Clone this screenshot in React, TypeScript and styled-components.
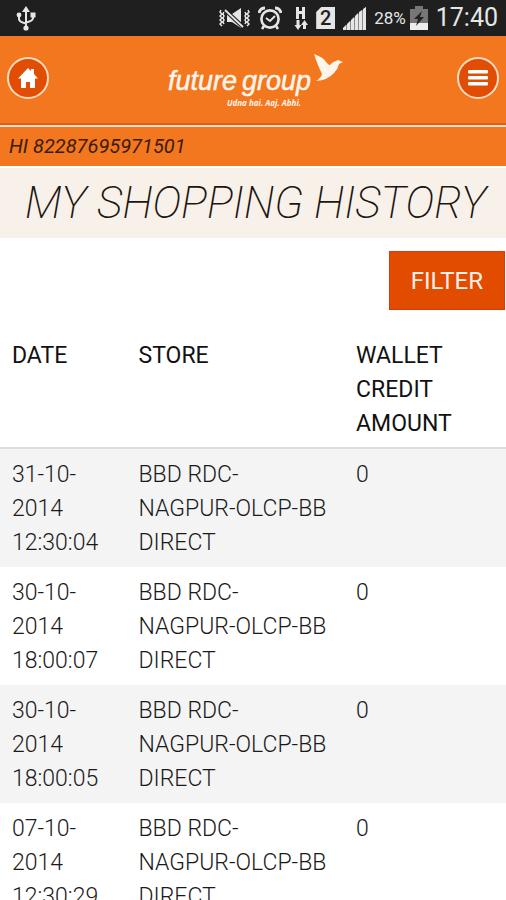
import React from "react";
import styled, { createGlobalStyle } from "styled-components";

const GlobalStyle = createGlobalStyle`
  * { box-sizing: border-box; }
  html, body, #root { height: 100%; }
  body {
    margin: 0;
    background: #fff;
    color: #1a1a1a;
    font-family: Roboto, "Liberation Sans", sans-serif;
  }
`;

const Screen = styled.div`
  min-height: 100%;
  display: flex;
  flex-direction: column;
`;

const StatusBar = styled.div`
  flex: none;
  height: 36px;
  padding: 0 8px 0 16px;
  display: flex;
  align-items: center;
  justify-content: space-between;
  background: #1f1f1f;
  color: #e6e6e6;
`;

const StatusGroup = styled.div`
  display: flex;
  align-items: center;
  gap: 8px;
`;

const BatteryStatus = styled.div`
  display: flex;
  align-items: center;
  gap: 4px;
`;

const BatteryLevel = styled.span`
  font-size: 17px;
`;

const Clock = styled.span`
  font-size: 25px;
  line-height: 36px;
`;

const Header = styled.header`
  flex: none;
  height: 91px;
  padding: 0 7px 6px;
  display: flex;
  align-items: center;
  justify-content: space-between;
  background: #f3771f;
  border-bottom: 2px solid #fde3c8;
  box-shadow: inset 0 -2px 0 #e25a1c;
`;

const RoundButton = styled.button`
  width: 42px;
  height: 42px;
  padding: 0;
  display: grid;
  place-items: center;
  border: 2px solid #fcdcc4;
  border-radius: 50%;
  background: #e24d04;
  color: #fff;
`;

const Brand = styled.a`
  display: block;
  color: #fff5ea;
  line-height: 0;
`;

const LogoName = styled.text`
  font-family: "Liberation Sans", Arial, sans-serif;
  font-size: 27px;
  font-style: italic;
  stroke: currentColor;
  stroke-width: 0.5px;
`;

const LogoTagline = styled.text`
  font-family: "Open Sans", sans-serif;
  font-size: 8px;
  font-style: italic;
  font-weight: 700;
`;

const Greeting = styled.div`
  flex: none;
  padding: 0 9px;
  height: 39px;
  background: #f3771f;
  color: #3a1c08;
  font-size: 20px;
  font-style: italic;
  font-weight: 400;
  line-height: 38px;
`;

const Title = styled.h1`
  flex: none;
  margin: 2px 0 0;
  padding: 0 16px 0 25px;
  background: #f7f1e9;
  color: #1c1512;
  font-size: 44px;
  font-style: italic;
  font-weight: 200;
  line-height: 70px;
  white-space: nowrap;
`;

const Toolbar = styled.div`
  flex: none;
  display: flex;
  justify-content: flex-end;
  padding: 13px 1px 20px;
`;

const FilterButton = styled.button`
  height: 59px;
  padding: 0 21px;
  border: 1px solid #d93a10;
  background: #e24c00;
  color: #fff0e8;
  font-family: inherit;
  font-size: 24px;
`;

const History = styled.table`
  width: 100%;
  table-layout: fixed;
  border-collapse: separate;
  border-spacing: 0;
  font-size: 23px;
  line-height: 34px;
  text-align: left;
`;

const Column = styled.col<{ $share: string }>`
  width: ${(p) => p.$share};
`;

const HeadCell = styled.th`
  padding: 9px 12px 6px;
  border-bottom: 2px solid #dddddd;
  vertical-align: top;
  font-weight: 400;
  color: #111;
`;

const Row = styled.tr`
  background: #fff;
  &:nth-child(odd) { background: #f4f4f4; }
`;

const Cell = styled.td`
  padding: 9px 12px 7px;
  vertical-align: top;
  font-weight: 300;
`;

const UsbIcon = () => (
  <svg width="20" height="25" viewBox="0 0 20 25" fill="none" stroke="currentColor" strokeWidth="2">
    <path d="M10 5v17M3 9v4q0 3 7 4.500M17 9v3q0 3-7 4.500" />
    <path d="M10 0l4 6H6z" fill="currentColor" stroke="none" />
    <circle cx="10" cy="22" r="2.600" fill="currentColor" stroke="none" />
    <circle cx="3" cy="9" r="2.400" fill="currentColor" stroke="none" />
    <path d="M14.500 6.500h5v5h-5z" fill="currentColor" stroke="none" />
  </svg>
);

const MutedIcon = () => (
  <svg width="31" height="22" viewBox="0 0 31 22" fill="none" stroke="currentColor" strokeWidth="1.500">
    <path d="M2 3l-1 2 2 2-2 2 2 2-2 2 2 2-2 2 2 2M5 5l-1 2 1 2-1 2 1 2-1 2 1 2M29 3l1 2-2 2 2 2-2 2 2 2-2 2 2 2-2 2M26 5l1 2-1 2 1 2-1 2 1 2-1 2" />
    <path d="M8 7h5l9-6v20l-9-6H8z" fill="currentColor" stroke="none" />
    <path d="M6 3l18 17" stroke="#1f1f1f" strokeWidth="4" />
    <path d="M6 3l18 17" strokeWidth="1.800" />
  </svg>
);

const AlarmIcon = () => (
  <svg width="24" height="24" viewBox="0 0 24 24" fill="none" stroke="currentColor">
    <circle cx="12" cy="13" r="8.600" strokeWidth="2.600" />
    <path d="M8 12l4 3 5-5" strokeWidth="2" />
    <path d="M1 7q1-5 6-5M23 7q-1-5-6-5" strokeWidth="2.800" />
    <path d="M6 20l-2 3M18 20l2 3" strokeWidth="2.600" />
  </svg>
);

const DataIcon = () => (
  <svg width="18" height="25" viewBox="-4 0 18 25" fill="currentColor">
    <path d="M2 1h3v4h3V1h3v12H8V8H5v5H2z" />
    <path d="M2.500 14h3v5h2l-3.500 5-3.500-5h2z" />
    <path d="M9 23h3v-4h2l-3.500-5L7 19h2z" />
  </svg>
);

const SimCard = styled.span`
  width: 19px;
  height: 22px;
  background: currentColor;
  clip-path: polygon(5px 0, 100% 0, 100% 100%, 0 100%, 0 5px);
`;

const SimNumber = styled.span`
  display: block;
  color: #1f1f1f;
  font-size: 20px;
  font-weight: 500;
  line-height: 22px;
  text-align: center;
`;

const SignalIcon = () => (
  <svg width="23" height="23" viewBox="0 0 23 23" fill="currentColor">
    <path d="M0 23v-2l3-3v5zM4 23v-6l3-3v9zM8 23V13l3-3v13zM12 23V9l3-3v17zM16 23V5l3-2v20zM20 23V2l3-2v23z" />
    <path d="M0 23v-2L23 0v23z" opacity=".55" />
  </svg>
);

const BatteryIcon = () => (
  <svg width="18" height="24" viewBox="0 0 18 24">
    <path d="M5 0h8v3h5v21H0V3h5z" fill="#777" />
    <path d="M0 17h18v7H0z" fill="#eee" />
    <path d="M12 5l-8 8h4l-2 7 8-9h-4z" fill="#222" />
  </svg>
);

const HomeIcon = () => (
  <svg width="20" height="20" viewBox="0 0 20 20" fill="currentColor">
    <path d="M10 0L0 10.500h3V20h5v-6h4v6h5v-9.500h3L16 6V1h-3v2z" />
  </svg>
);

const MenuIcon = () => (
  <svg width="20" height="16" viewBox="0 0 20 16" fill="currentColor">
    <rect width="20" height="3.500" rx="1" />
    <rect y="6" width="20" height="3.500" rx="1" />
    <rect y="12" width="20" height="3.500" rx="1" />
  </svg>
);

const Logo = () => (
  <svg width="182" height="60" viewBox="0 0 182 60" fill="currentColor" role="img" aria-label="future group">
    <LogoName x="6" y="42">future</LogoName>
    <LogoName x="80" y="42">group</LogoName>
    <LogoTagline x="65" y="58">Udna hai. Aaj. Abhi.</LogoTagline>
    <path d="M152 6q9 3 12 8 4 4 4 3 2-3 6-4 3-2 4 0l3 1-4 2q-1 5-5 9-6 7-18 8 5-3 6-7-4-8-8-20z" />
  </svg>
);

const visits = [
  { date: "31-10-2014 12:30:04", store: "BBD RDC-NAGPUR-OLCP-BB DIRECT", amount: 0 },
  { date: "30-10-2014 18:00:07", store: "BBD RDC-NAGPUR-OLCP-BB DIRECT", amount: 0 },
  { date: "30-10-2014 18:00:05", store: "BBD RDC-NAGPUR-OLCP-BB DIRECT", amount: 0 },
  { date: "07-10-2014 12:30:29", store: "BBD RDC-NAGPUR-OLCP-BB DIRECT", amount: 0 },
];

export default function App() {
  return (
    <Screen>
      <GlobalStyle />
      <StatusBar>
        <UsbIcon />
        <StatusGroup>
          <MutedIcon />
          <AlarmIcon />
          <DataIcon />
          <SimCard><SimNumber>2</SimNumber></SimCard>
          <SignalIcon />
          <BatteryStatus>
            <BatteryLevel>28%</BatteryLevel>
            <BatteryIcon />
          </BatteryStatus>
          <Clock>17:40</Clock>
        </StatusGroup>
      </StatusBar>
      <Header>
        <RoundButton aria-label="Home"><HomeIcon /></RoundButton>
        <Brand href="#"><Logo /></Brand>
        <RoundButton aria-label="Menu"><MenuIcon /></RoundButton>
      </Header>
      <Greeting>HI 82287695971501</Greeting>
      <Title>MY SHOPPING HISTORY</Title>
      <Toolbar>
        <FilterButton>FILTER</FilterButton>
      </Toolbar>
      <History>
        <colgroup>
          <Column $share="25%" />
          <Column $share="43%" />
          <Column $share="32%" />
        </colgroup>
        <thead>
          <tr>
            <HeadCell scope="col">DATE</HeadCell>
            <HeadCell scope="col">STORE</HeadCell>
            <HeadCell scope="col">WALLET CREDIT AMOUNT</HeadCell>
          </tr>
        </thead>
        <tbody>
          {visits.map((visit) => (
            <Row key={visit.date}>
              <Cell>{visit.date}</Cell>
              <Cell>{visit.store}</Cell>
              <Cell>{visit.amount}</Cell>
            </Row>
          ))}
        </tbody>
      </History>
    </Screen>
  );
}
